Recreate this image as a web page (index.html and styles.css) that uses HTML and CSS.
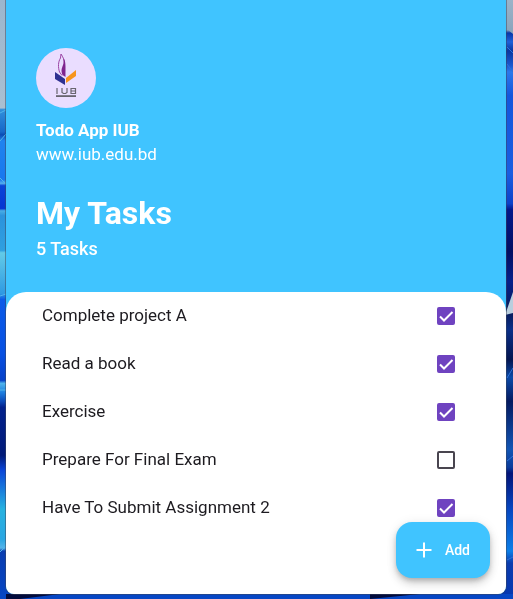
FILE: index.html
```html
<!DOCTYPE html>
<html lang="en">
<head>
<meta charset="utf-8">
<meta name="viewport" content="width=device-width, initial-scale=1">
<title>Todo App IUB</title>
<link rel="stylesheet" href="styles.css">
</head>
<body>
<svg class="wallpaper" viewBox="0 0 513 599" preserveAspectRatio="none" aria-hidden="true">
  <defs>
    <linearGradient id="left" x1="0" y1="0" x2="0" y2="1">
      <stop offset="0" stop-color="#9bb6cd"/><stop offset=".18" stop-color="#a9bfd1"/>
      <stop offset=".183" stop-color="#2f8fdc"/><stop offset=".22" stop-color="#1767c8"/>
      <stop offset=".225" stop-color="#0a4cb4"/><stop offset=".235" stop-color="#2083ee"/>
      <stop offset=".3" stop-color="#1877ee"/><stop offset=".306" stop-color="#55b0ee"/>
      <stop offset=".31" stop-color="#0a45d8"/><stop offset=".348" stop-color="#0636d2"/>
      <stop offset=".352" stop-color="#49aee5"/><stop offset=".36" stop-color="#2b93dc"/>
      <stop offset=".418" stop-color="#2f9fe0"/><stop offset=".422" stop-color="#62cbe8"/>
      <stop offset=".49" stop-color="#2f9ae2"/><stop offset=".5" stop-color="#0b5be8"/>
      <stop offset=".59" stop-color="#0850e2"/><stop offset=".635" stop-color="#0640c8"/>
      <stop offset=".64" stop-color="#4fb4ec"/><stop offset=".655" stop-color="#1d7fe0"/>
      <stop offset=".67" stop-color="#0b49b8"/><stop offset=".68" stop-color="#02218c"/>
      <stop offset=".76" stop-color="#011a78"/><stop offset=".785" stop-color="#0b46d8"/>
      <stop offset=".85" stop-color="#27b2e0"/><stop offset=".9" stop-color="#2aa6e2"/>
      <stop offset=".915" stop-color="#55b4ea"/><stop offset=".92" stop-color="#0a3db0"/>
      <stop offset="1" stop-color="#0646c4"/>
    </linearGradient>
    <linearGradient id="right" x1="0" y1="0" x2="0" y2="1">
      <stop offset="0" stop-color="#9bb3c8"/><stop offset=".05" stop-color="#8ba5bd"/>
      <stop offset=".055" stop-color="#0836a8"/><stop offset=".07" stop-color="#1f60d8"/>
      <stop offset=".085" stop-color="#0a36a0"/><stop offset=".11" stop-color="#1d5ad0"/>
      <stop offset=".12" stop-color="#2c78ea"/><stop offset=".16" stop-color="#1456dc"/>
      <stop offset=".29" stop-color="#1a5ee0"/><stop offset=".34" stop-color="#0c42c8"/>
      <stop offset=".35" stop-color="#03188a"/><stop offset=".42" stop-color="#020f62"/>
      <stop offset=".47" stop-color="#06208a"/><stop offset=".52" stop-color="#071b58"/>
      <stop offset=".55" stop-color="#0a2f88"/><stop offset=".6" stop-color="#041550"/>
      <stop offset=".63" stop-color="#0b4aa8"/><stop offset=".67" stop-color="#041a60"/>
      <stop offset=".75" stop-color="#1255b4"/><stop offset=".78" stop-color="#0b3c9c"/>
      <stop offset=".79" stop-color="#031478"/><stop offset=".85" stop-color="#0646c0"/>
      <stop offset=".92" stop-color="#0c7fe8"/><stop offset=".94" stop-color="#0b3cae"/>
      <stop offset="1" stop-color="#0637b0"/>
    </linearGradient>
  </defs>
  <path fill="url(#left)" d="M0 0H256V599H0z"/>
  <path fill="url(#right)" d="M256 0H513V599H256z"/>
  <path fill="#8ba5bd" d="M506 28 513 34V28z"/>
  <path fill="#b9cede" d="M505 315 513 292V313z"/>
  <path fill="#0646c4" d="M0 594H513V599H0z"/>
  <path fill="#020b3c" d="M6 594H60L20 599H6zM370 594H420L370 599z"/>
  <g fill="none" stroke="#51b5ea">
    <path d="M0 113 6 110M0 141 6 134M0 178 6 184M0 296 6 294M0 390H6M0 552 6 546"/>
    <path stroke="#2e72d8" d="M507 47 513 53M507 64 513 72M507 378 513 368M507 461 513 456M507 560 513 557"/>
  </g>
</svg>

<div class="app">
  <header class="header">
    <svg class="avatar" viewBox="0 0 60 60" role="img" aria-label="IUB logo">
      <circle cx="30" cy="30" r="30" fill="#eaddff"/>
      <path d="M25 6 24.500 10C22 14 22 19 23.500 24L26 27.500M25 6C27 9 28.500 12 28.500 16" fill="none" stroke="#9b45a5" stroke-width="1"/>
      <path d="M27.500 10C30 14 29.500 18 29.500 29L26.500 27C24.500 22 26 20 27 17 28 14.500 27.500 12 27.500 10z" fill="#7f248f"/>
      <path d="M19 24 29 31V37L19 31z" fill="#2e3192"/>
      <path d="M40 22V28L30 35V30z" fill="#f7941d"/>
      <path d="M21 40V46M26 40V44.500L27.500 45.500H29.500L31 44.500V40M35 40.500H39.500V45.500H35zM35 43H40" fill="none" stroke="#68656f" stroke-width="1.200"/>
      <path d="M20 47.200H40V49H20z" fill="#68656f"/>
    </svg>
    <p class="name">Todo App IUB</p>
    <p class="site">www.iub.edu.bd</p>
    <h1 class="title">My Tasks</h1>
    <p class="count">5 Tasks</p>
  </header>

  <main class="sheet">
    <ul class="tasks">
      <li><label class="task"><span class="label">Complete project A</span><span class="check"><input type="checkbox" checked><svg viewBox="0 0 18 18" aria-hidden="true"><path d="M3 9.500 7 13.500 15.500 5"/></svg></span></label></li>
      <li><label class="task"><span class="label">Read a book</span><span class="check"><input type="checkbox" checked><svg viewBox="0 0 18 18" aria-hidden="true"><path d="M3 9.500 7 13.500 15.500 5"/></svg></span></label></li>
      <li><label class="task"><span class="label">Exercise</span><span class="check"><input type="checkbox" checked><svg viewBox="0 0 18 18" aria-hidden="true"><path d="M3 9.500 7 13.500 15.500 5"/></svg></span></label></li>
      <li><label class="task"><span class="label">Prepare For Final Exam</span><span class="check"><input type="checkbox"><svg viewBox="0 0 18 18" aria-hidden="true"><path d="M3 9.500 7 13.500 15.500 5"/></svg></span></label></li>
      <li><label class="task"><span class="label">Have To Submit Assignment 2</span><span class="check"><input type="checkbox" checked><svg viewBox="0 0 18 18" aria-hidden="true"><path d="M3 9.500 7 13.500 15.500 5"/></svg></span></label></li>
    </ul>
  </main>

  <button class="add" type="button">
    <svg viewBox="0 0 24 24" aria-hidden="true"><path d="M11 4.500h2V11h6.500v2H13v6.500h-2V13H4.500v-2H11z"/></svg>
    <span>Add</span>
  </button>
</div>
</body>
</html>
```
FILE: styles.css
```css
* {
  box-sizing: border-box;
}

body {
  margin: 0;
  min-height: 100vh;
  display: flex;
  padding: 0 7px 5px 6px;
  font-family: Roboto, "Liberation Sans", sans-serif;
  background: #0646c4;
}

.wallpaper {
  position: fixed;
  inset: 0;
  width: 100%;
  height: 100%;
}

.app {
  position: relative;
  flex: 1;
  display: flex;
  flex-direction: column;
  overflow: hidden;
  border-radius: 0 0 8px 8px;
  background: #40c4ff;
  box-shadow: 0 0 0 1px rgb(60 70 90 / 50%);
}

.header {
  padding: 48px 30px 31px;
  color: #fff;
}

.header p,
.header h1 {
  margin: 0;
}

.avatar {
  display: block;
  width: 60px;
  height: 60px;
  margin-bottom: 10px;
}

.name,
.site {
  font-size: 17px;
  line-height: 24px;
}

.name {
  font-weight: 700;
}

.title {
  padding-top: 27px;
  font-size: 32px;
  line-height: 40px;
  font-weight: 700;
}

.header .count {
  padding-top: 4px;
  font-size: 18px;
  line-height: 24px;
  font-weight: 500;
}

.sheet {
  flex: 1;
  border-radius: 20px 20px 0 0;
  background: #fff;
}

.tasks {
  margin: 0;
  padding: 0 51px 0 36px;
  list-style: none;
}

.task {
  display: flex;
  align-items: center;
  justify-content: space-between;
  height: 48px;
  font-size: 17px;
  line-height: 24px;
  color: #1d1b20;
}

.label {
  padding-bottom: 2px;
}

.check {
  display: grid;
}

.check input,
.check svg {
  grid-area: 1 / 1;
  width: 18px;
  height: 18px;
  margin: 0;
}

.check input {
  appearance: none;
  border: 2px solid #49454f;
  border-radius: 2px;
}

.check input:checked {
  border-color: #6f43c0;
  background: #6f43c0;
}

.check svg {
  fill: none;
  stroke: #fff;
  stroke-width: 2;
  pointer-events: none;
  visibility: hidden;
}

.check input:checked + svg {
  visibility: visible;
}

.add {
  position: absolute;
  right: 16px;
  bottom: 16px;
  display: flex;
  align-items: center;
  gap: 9px;
  height: 56px;
  padding: 0 20px 0 16px;
  border: 0;
  border-radius: 16px;
  background: #40c4ff;
  color: #fff;
  font: 500 14px/20px Roboto, "Liberation Sans", sans-serif;
  box-shadow: 0 3px 5px -1px rgb(0 0 0 / 20%), 0 6px 10px rgb(0 0 0 / 14%), 0 1px 12px rgb(0 0 0 / 8%);
}

.add svg {
  width: 24px;
  height: 24px;
  fill: #fff;
}
```
